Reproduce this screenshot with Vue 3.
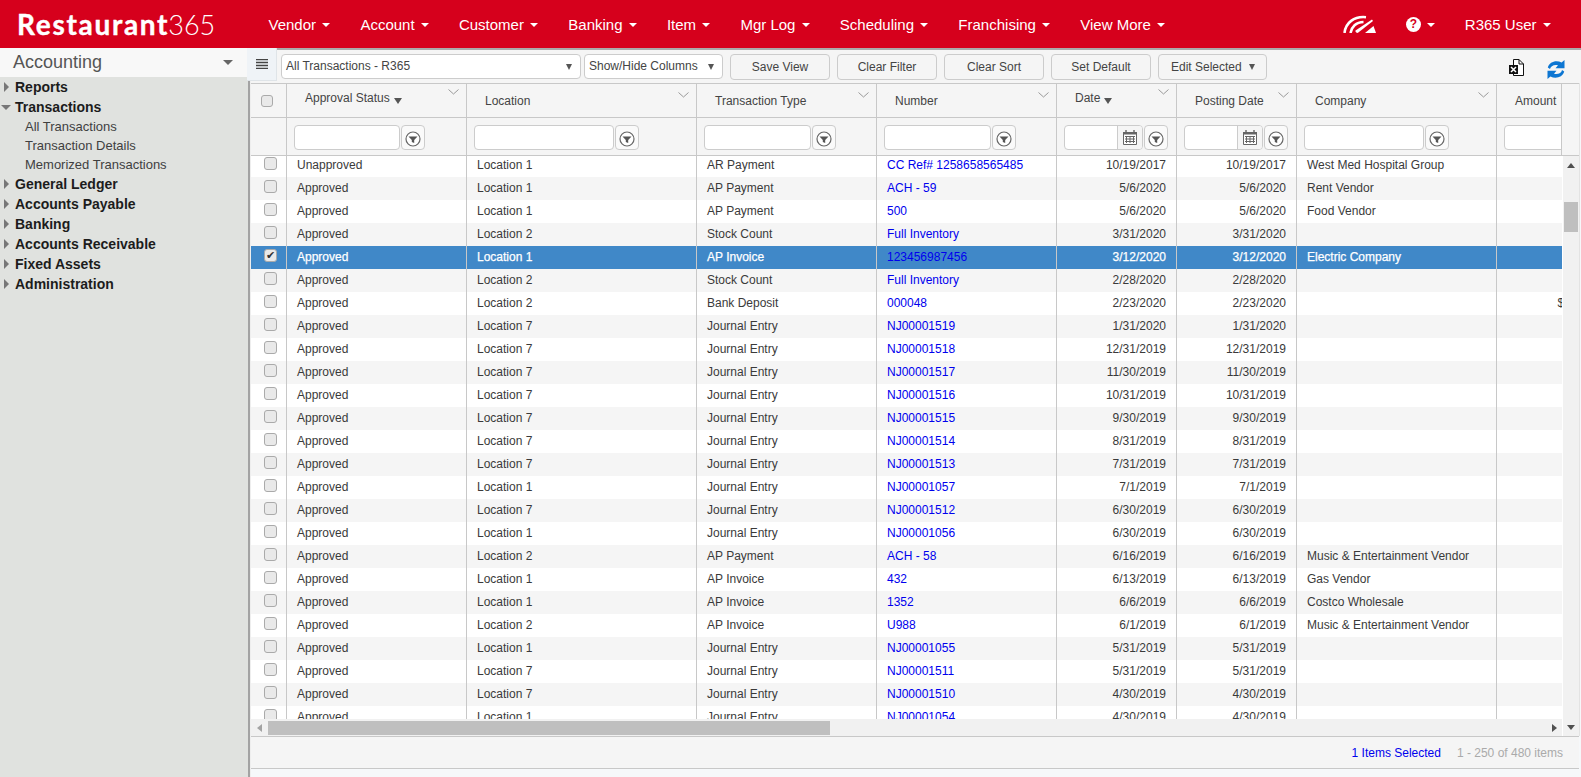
<script setup>
const nav = ['Vendor', 'Account', 'Customer', 'Banking', 'Item', 'Mgr Log', 'Scheduling', 'Franchising', 'View More']
const tree = [
  { label: 'Reports' },
  { label: 'Transactions', open: true, children: ['All Transactions', 'Transaction Details', 'Memorized Transactions'] },
  { label: 'General Ledger' },
  { label: 'Accounts Payable' },
  { label: 'Banking' },
  { label: 'Accounts Receivable' },
  { label: 'Fixed Assets' },
  { label: 'Administration' }
]
const buttons = ['Save View', 'Clear Filter', 'Clear Sort', 'Set Default']
const cols = [
  { label: 'Approval Status', input: 106, sorted: true },
  { label: 'Location', input: 140 },
  { label: 'Transaction Type', input: 107 },
  { label: 'Number', input: 107 },
  { label: 'Date', input: 79, sorted: true, date: true },
  { label: 'Posting Date', input: 79, date: true },
  { label: 'Company', input: 120 },
  { label: 'Amount', input: 80 }
]
const J = 'Journal Entry'
const rows = [
  ['Unapproved', 1, 'AR Payment', 'CC Ref# 1258658565485', '10/19/2017', '10/19/2017', 'West Med Hospital Group'],
  ['Approved', 1, 'AP Payment', 'ACH - 59', '5/6/2020', '5/6/2020', 'Rent Vendor'],
  ['Approved', 1, 'AP Payment', '500', '5/6/2020', '5/6/2020', 'Food Vendor'],
  ['Approved', 2, 'Stock Count', 'Full Inventory', '3/31/2020', '3/31/2020', ''],
  ['Approved', 1, 'AP Invoice', '123456987456', '3/12/2020', '3/12/2020', 'Electric Company'],
  ['Approved', 2, 'Stock Count', 'Full Inventory', '2/28/2020', '2/28/2020', ''],
  ['Approved', 2, 'Bank Deposit', '000048', '2/23/2020', '2/23/2020', '', '$1,250.00'],
  ['Approved', 7, J, 'NJ00001519', '1/31/2020', '1/31/2020', ''],
  ['Approved', 7, J, 'NJ00001518', '12/31/2019', '12/31/2019', ''],
  ['Approved', 7, J, 'NJ00001517', '11/30/2019', '11/30/2019', ''],
  ['Approved', 7, J, 'NJ00001516', '10/31/2019', '10/31/2019', ''],
  ['Approved', 7, J, 'NJ00001515', '9/30/2019', '9/30/2019', ''],
  ['Approved', 7, J, 'NJ00001514', '8/31/2019', '8/31/2019', ''],
  ['Approved', 7, J, 'NJ00001513', '7/31/2019', '7/31/2019', ''],
  ['Approved', 1, J, 'NJ00001057', '7/1/2019', '7/1/2019', ''],
  ['Approved', 7, J, 'NJ00001512', '6/30/2019', '6/30/2019', ''],
  ['Approved', 1, J, 'NJ00001056', '6/30/2019', '6/30/2019', ''],
  ['Approved', 2, 'AP Payment', 'ACH - 58', '6/16/2019', '6/16/2019', 'Music & Entertainment Vendor'],
  ['Approved', 1, 'AP Invoice', '432', '6/13/2019', '6/13/2019', 'Gas Vendor'],
  ['Approved', 1, 'AP Invoice', '1352', '6/6/2019', '6/6/2019', 'Costco Wholesale'],
  ['Approved', 2, 'AP Invoice', 'U988', '6/1/2019', '6/1/2019', 'Music & Entertainment Vendor'],
  ['Approved', 1, J, 'NJ00001055', '5/31/2019', '5/31/2019', ''],
  ['Approved', 7, J, 'NJ00001511', '5/31/2019', '5/31/2019', ''],
  ['Approved', 7, J, 'NJ00001510', '4/30/2019', '4/30/2019', ''],
  ['Approved', 1, J, 'NJ00001054', '4/30/2019', '4/30/2019', '']
]
</script>

<template>
  <div class="app">
    <header class="topbar">
      <div class="logo"><b>Restaurant</b><span>365</span></div>
      <nav class="nav">
        <a v-for="n in nav" :key="n" class="nav-item">{{ n }}<i class="caret-w"></i></a>
      </nav>
      <div class="nav-right">
        <svg class="gauge" width="33" height="18" viewBox="0 0 33 18">
          <path d="M1.5 18C2.5 8 11 1 23 2.2" fill="none" stroke="#fff" stroke-width="2.6" />
          <path d="M7.5 18C8.5 12 13 7 20.5 7" fill="none" stroke="#fff" stroke-width="2.6" />
          <path d="M12.5 15.5L29 4.5L30 6L15 17.8C13.6 18.2 12 17 12.5 15.5Z" fill="#fff" />
          <path d="M22 18L30.5 11L33 18Z" fill="#fff" />
        </svg>
        <span class="help"><span class="help-dot">?</span><i class="caret-w"></i></span>
        <span class="user">R365 User<i class="caret-w"></i></span>
      </div>
    </header>

    <div class="page">
      <aside class="sidebar">
        <div class="side-head"><span>Accounting</span><i class="side-caret"></i></div>
        <ul class="tree">
          <li v-for="t in tree" :key="t.label">
            <div class="tree-row">
              <i :class="t.open ? 'tri-down' : 'tri-right'"></i>{{ t.label }}
            </div>
            <div v-for="c in t.children" :key="c" class="tree-sub">{{ c }}</div>
          </li>
        </ul>
      </aside>

      <main class="main">
        <div class="toolbar">
          <div class="menu-btn">
            <svg width="12" height="10" viewBox="0 0 12 10"><path d="M0 .5H12M0 3.5H12M0 6.5H12M0 9.5H12" stroke="#444" stroke-width="1.4" /></svg>
          </div>
          <div class="tools">
            <div class="select sel-view"><span>All Transactions - R365</span><i class="tri-dark"></i></div>
            <div class="select sel-cols"><span>Show/Hide Columns</span><i class="tri-dark"></i></div>
            <button v-for="b in buttons" :key="b" class="btn">{{ b }}</button>
            <button class="btn btn-edit">Edit Selected<i class="tri-dark"></i></button>
            <svg class="excel" width="15" height="17" viewBox="0 0 15 17">
              <path d="M4.5 .5H10L14.5 5V16.5H4.5Z" fill="#fff" stroke="#111" stroke-width="1" />
              <path d="M10 .5V5H14.5" fill="none" stroke="#111" stroke-width="1" />
              <rect x="0" y="6" width="9" height="9" fill="#111" />
              <path d="M2 8L7 13M7 8L2 13" stroke="#fff" stroke-width="1.5" />
            </svg>
            <svg class="refresh" width="18" height="19" viewBox="0 0 18 19">
              <path d="M3 9C3.5 6 7 4.2 11 5.2L8.5 8.2H17.5V0L14.6 2.6C9.5 -.2 2.5 1.5 .8 7.5Z" fill="#0d76d2" />
              <path d="M15 10C14.5 13 11 14.8 7 13.8L9.5 10.8H.5V19L3.4 16.4C8.5 19.2 15.5 17.5 17.2 11.5Z" fill="#0d76d2" />
            </svg>
          </div>
        </div>

        <div class="lower">
          <div class="splitter"></div>
          <div class="content">
            <div class="grid">
              <div class="head-wrap">
                <div class="head">
                  <div class="gridline head-row">
                    <div class="cell check-cell"><span class="check check-head"></span></div>
                    <div v-for="c in cols" :key="c.label" class="cell head-cell" :class="{ sorted: c.sorted }">
                      <span class="head-label">{{ c.label }}</span>
                      <i v-if="c.sorted" class="tri-sort"></i>
                      <svg class="chev" width="11" height="6" viewBox="0 0 11 6"><path d="M.5 .5L5.5 5L10.5 .5" fill="none" stroke="#999" stroke-width="1" /></svg>
                    </div>
                  </div>
                  <div class="gridline filter-row">
                    <div class="cell check-cell"></div>
                    <div v-for="c in cols" :key="c.label" class="cell filter-cell">
                      <div class="finput" :style="{ width: c.input + 'px' }">
                        <span v-if="c.date" class="cal">
                          <svg width="14" height="15" viewBox="0 0 14 15">
                            <path d="M.5 2.5H13.5V14.5H.5Z" fill="#fff" stroke="#666" />
                            <path d="M0 2H14V4.5H0Z" fill="#666" />
                            <path d="M3 0V3M11 0V3" stroke="#666" stroke-width="1.4" />
                            <path d="M2 6.5H12M2 9H12M2 11.5H12" stroke="#666" />
                            <path d="M3.5 6V13M7 6V13M10.5 6V13" stroke="#666" />
                          </svg>
                        </span>
                      </div>
                      <span class="fbtn">
                        <svg width="16" height="16" viewBox="0 0 16 16">
                          <circle cx="8" cy="8" r="7" fill="#fff" stroke="#666" stroke-width="1.2" />
                          <path d="M3.5 5.5H12.5L9.2 9V12L6.8 11V9Z" fill="#555" />
                        </svg>
                      </span>
                    </div>
                  </div>
                </div>
                <div class="head-gap"></div>
              </div>

              <div class="body-wrap">
                <div class="body-col">
                  <div class="rows">
                    <div class="rows-inner">
                      <div v-for="(r, i) in rows" :key="i" class="gridline row" :class="{ alt: i % 2 === 1, selected: i === 4 }">
                        <div class="cell check-cell"><span class="check check-row" :class="{ on: i === 4 }"><template v-if="i === 4">✔</template></span></div>
                        <div class="cell td">{{ r[0] }}</div>
                        <div class="cell td">Location {{ r[1] }}</div>
                        <div class="cell td">{{ r[2] }}</div>
                        <div class="cell td"><a class="link">{{ r[3] }}</a></div>
                        <div class="cell td right">{{ r[4] }}</div>
                        <div class="cell td right">{{ r[5] }}</div>
                        <div class="cell td">{{ r[6] }}</div>
                        <div class="cell td amount">{{ r[7] }}</div>
                      </div>
                    </div>
                  </div>
                  <div class="hbar">
                    <i class="arr-left"></i>
                    <div class="hthumb"></div>
                    <i class="arr-right"></i>
                  </div>
                </div>
                <div class="vbar">
                  <i class="arr-up"></i>
                  <div class="vthumb"></div>
                  <i class="arr-down"></i>
                </div>
              </div>
            </div>
            <footer class="footer">
              <span class="sel-count">1 Items Selected</span>
              <span class="page-count">1 - 250 of 480 items</span>
            </footer>
            <div class="tail"></div>
          </div>
        </div>
      </main>
    </div>
  </div>
</template>

<style>
html, body { margin: 0; padding: 0; overflow: hidden; }
</style>

<style scoped>
.app {
  width: 1581px;
  height: 777px;
  display: flex;
  flex-direction: column;
  overflow: hidden;
  font-family: "Liberation Sans", Arial, sans-serif;
  font-size: 12px;
  color: #3a3a3a;
  background: #fff;
}
i { display: block; font-style: normal; }

/* top bar */
.topbar {
  height: 48px;
  flex: none;
  display: flex;
  align-items: center;
  background: #d6001c;
  color: #fff;
}
.logo {
  width: 237px;
  padding-left: 17px;
  box-sizing: border-box;
  font-family: Lato, "Liberation Sans", sans-serif;
  font-size: 28px;
  line-height: 46px;
  white-space: nowrap;
}
.logo b { font-weight: 700; letter-spacing: 1.7px; -webkit-text-stroke: 0.4px #fff; }
.logo span { font-weight: 300; font-size: 27px; margin-left: -1px; }
.nav { display: flex; padding-left: 16.5px; }
.nav-item {
  display: flex;
  align-items: center;
  gap: 6.35px;
  padding: 0 15px;
  font-size: 15px;
  white-space: nowrap;
}
.caret-w {
  width: 0;
  height: 0;
  margin-top: 2px;
  border-left: 4px solid transparent;
  border-right: 4px solid transparent;
  border-top: 4px solid #fff;
}
.nav-right {
  margin-left: auto;
  display: flex;
  align-items: center;
  padding-right: 30px;
  font-size: 15px;
}
.gauge { margin-top: -1px; }
.help { display: flex; align-items: center; gap: 6px; margin-left: 30px; }
.help-dot {
  width: 15px;
  height: 15px;
  border-radius: 50%;
  background: #fff;
  color: #d6001c;
  font-size: 12px;
  font-weight: 700;
  line-height: 15px;
  text-align: center;
}
.user { display: flex; align-items: center; gap: 6.5px; margin-left: 30px; white-space: nowrap; }

/* page */
.page { flex: 1; display: flex; min-height: 0; }
.sidebar { width: 247px; flex: none; background: #e0e2df; }
.side-head {
  height: 29px;
  background: #f8f8f8;
  display: flex;
  align-items: center;
  justify-content: space-between;
  padding: 0 14px 0 13px;
  font-size: 18px;
  color: #555;
}
.side-caret {
  width: 0;
  height: 0;
  border-left: 5px solid transparent;
  border-right: 5px solid transparent;
  border-top: 5px solid #666;
}
.tree { list-style: none; margin: 0; padding: 0; }
.tree-row {
  height: 20px;
  display: flex;
  align-items: center;
  padding-left: 4px;
  font-size: 14px;
  font-weight: 700;
  color: #1c1c1c;
  white-space: nowrap;
}
.tri-right {
  width: 0;
  height: 0;
  margin-right: 6px;
  border-top: 5px solid transparent;
  border-bottom: 5px solid transparent;
  border-left: 5px solid #777;
}
.tri-down {
  width: 0;
  height: 0;
  margin: 0 4px 0 -3px;
  border-left: 5px solid transparent;
  border-right: 5px solid transparent;
  border-top: 5px solid #777;
}
.tree-sub {
  height: 19px;
  line-height: 20px;
  padding-left: 25px;
  font-size: 13px;
  color: #3f3f3f;
}

/* toolbar */
.main { flex: 1; min-width: 0; display: flex; flex-direction: column; }
.toolbar { height: 35px; flex: none; display: flex; background: #f5f5f5; }
.menu-btn {
  width: 29px;
  height: 32px;
  flex: none;
  display: flex;
  align-items: center;
  justify-content: center;
  background: #eff3f7;
  border-right: 1px solid #dfe4e8;
  border-bottom: 1px solid #dfe4e8;
}
.tools {
  flex: 1;
  display: flex;
  align-items: flex-start;
  gap: 7px;
  padding: 4px 0 0 4px;
  border-top: 2px solid #aaa;
}
.select {
  height: 25px;
  box-sizing: border-box;
  display: flex;
  align-items: center;
  justify-content: space-between;
  padding: 0 8px 2px 4px;
  background: #fff;
  border: 1px solid #ccc;
  border-radius: 4px;
  color: #444;
  white-space: nowrap;
}
.sel-view { width: 300px; margin-right: -4px; }
.sel-cols { width: 139px; padding-right: 8px; }
.select .tri-dark { margin-top: 2px; }
.tri-dark {
  width: 0;
  height: 0;
  border-left: 3.5px solid transparent;
  border-right: 3.5px solid transparent;
  border-top: 6px solid #555;
}
.btn {
  width: 100px;
  height: 26px;
  padding: 0;
  box-sizing: border-box;
  background: #f5f5f5;
  border: 1px solid #ccc;
  border-radius: 4px;
  font: inherit;
  color: #444;
}
.btn-edit {
  width: 109px;
  display: flex;
  align-items: center;
  gap: 7px;
  padding-left: 12px;
}
.excel { margin: 5px 0 0 235px; }
.refresh { margin: 6px 0 0 16px; }

/* grid */
.lower { flex: 1; min-height: 0; display: flex; }
.splitter {
  width: 4px;
  flex: none;
  box-sizing: border-box;
  margin-top: -2px;
  background: #a3a3a3;
  border-left: 1px solid #e0e2df;
  border-right: 1px solid #eee;
}
.content {
  flex: 1;
  min-width: 0;
  padding-right: 2px;
  display: flex;
  flex-direction: column;
  background: #f6f8fa;
}
.grid { height: 653px; flex: none; display: flex; flex-direction: column; background: #fff; border-right: 1px solid #e3e3e3; margin-right: -1px; }
.head-wrap { flex: none; display: flex; background: #f5f5f5; border-top: 1px solid #c8c8c8; border-bottom: 1px solid #c8c8c8; }
.head { flex: 1; min-width: 0; overflow: hidden; }
.head-gap { width: 17px; flex: none; border-left: 1px solid #c8c8c8; margin-left: -1px; }
.gridline {
  display: grid;
  grid-template-columns: 36px 180px 230px 180px 180px 120px 120px 200px 120px;
  width: 1366px;
}
.cell { box-sizing: border-box; border-right: 1px solid #c8c8c8; min-width: 0; }
.head-row { height: 34px; border-bottom: 1px solid #c8c8c8; box-sizing: border-box; }
.head-cell {
  position: relative;
  display: flex;
  align-items: center;
  padding-left: 18px;
  padding-top: 1px;
  color: #444;
  white-space: nowrap;
}
.head-cell.sorted { padding-top: 0; padding-bottom: 5px; }
.tri-sort {
  width: 0;
  height: 0;
  margin: 5px 0 0 4px;
  border-left: 4px solid transparent;
  border-right: 4px solid transparent;
  border-top: 6px solid #555;
}
.chev { position: absolute; right: 7px; top: 8px; }
.sorted .chev { top: 5px; }
.check-cell { display: flex; }
.check {
  box-sizing: border-box;
  display: block;
  border: 1px solid #aaa;
  border-radius: 3px;
  background: #e9e9e9;
}
.check-head { width: 12px; height: 12px; margin: 11px 0 0 10px; }
.check-row {
  width: 13px;
  height: 13px;
  margin: 3px 0 0 13px;
  font-size: 11px;
  line-height: 11px;
  text-align: center;
  color: #333;
}
.filter-row { height: 37px; box-sizing: border-box; }
.filter-cell { display: flex; align-items: flex-start; gap: 1px; padding: 7px 0 0 7px; }
.finput {
  flex: none;
  height: 25px;
  box-sizing: border-box;
  display: flex;
  justify-content: flex-end;
  background: #fff;
  border: 1px solid #ccc;
  border-radius: 4px;
}
.cal {
  width: 24px;
  display: flex;
  align-items: center;
  justify-content: center;
  background: #f5f5f5;
  border-left: 1px solid #ccc;
  border-radius: 0 3px 3px 0;
}
.fbtn {
  width: 24px;
  height: 25px;
  flex: none;
  box-sizing: border-box;
  display: flex;
  align-items: center;
  justify-content: center;
  padding-top: 2px;
  background: #fafafa;
  border: 1px solid #ccc;
  border-radius: 4px;
}
.body-wrap { flex: 1; min-height: 0; display: flex; }
.body-col { flex: 1; min-width: 0; display: flex; flex-direction: column; }
.rows { flex: 1; min-height: 0; overflow: hidden; }
.rows-inner { margin-top: -2px; }
.row { height: 23px; background: #fff; }
.row.alt { background: #f5f5f5; }
.row.selected { background: #4088c8; color: #fff; }
.td {
  padding: 0 10px;
  line-height: 22px;
  white-space: nowrap;
  overflow: hidden;
}
.selected .td { -webkit-text-stroke: 0.25px #fff; }
.selected .td .link { -webkit-text-stroke: 0; }
.right { text-align: right; }
.amount { text-align: right; padding-right: 6px; border-right: 0; }
.link { color: #0000ee; }
.hbar {
  height: 17px;
  flex: none;
  display: flex;
  align-items: center;
  background: #f1f1f1;
}
.arr-left {
  width: 0;
  height: 0;
  margin-left: 6px;
  border-top: 4px solid transparent;
  border-bottom: 4px solid transparent;
  border-right: 5px solid #a3a3a3;
}
.hthumb { width: 562px; height: 14px; margin-left: 6px; background: #bfbfbf; }
.arr-right {
  width: 0;
  height: 0;
  margin-left: auto;
  margin-right: 5px;
  border-top: 4px solid transparent;
  border-bottom: 4px solid transparent;
  border-left: 5px solid #505050;
}
.vbar {
  width: 17px;
  flex: none;
  box-sizing: border-box;
  display: flex;
  flex-direction: column;
  align-items: center;
  background: #f1f1f1;
  border-left: 1px solid #fff;
}
.arr-up {
  width: 0;
  height: 0;
  margin-top: 7px;
  border-left: 4px solid transparent;
  border-right: 4px solid transparent;
  border-bottom: 5px solid #505050;
}
.vthumb { width: 14px; height: 30px; margin-top: 34px; background: #bfbfbf; }
.arr-down {
  width: 0;
  height: 0;
  margin-top: auto;
  margin-bottom: 6px;
  border-left: 4px solid transparent;
  border-right: 4px solid transparent;
  border-top: 5px solid #505050;
}
.footer {
  height: 33px;
  flex: none;
  box-sizing: border-box;
  display: flex;
  align-items: center;
  justify-content: flex-end;
  gap: 16px;
  padding-right: 16px;
  background: #f5f5f5;
  border-top: 1px solid #c8c8c8;
  border-bottom: 1px solid #c8c8c8;
}
.sel-count { color: #0000ee; }
.page-count { color: #aaa; }
.tail { flex: 1; }
</style>
